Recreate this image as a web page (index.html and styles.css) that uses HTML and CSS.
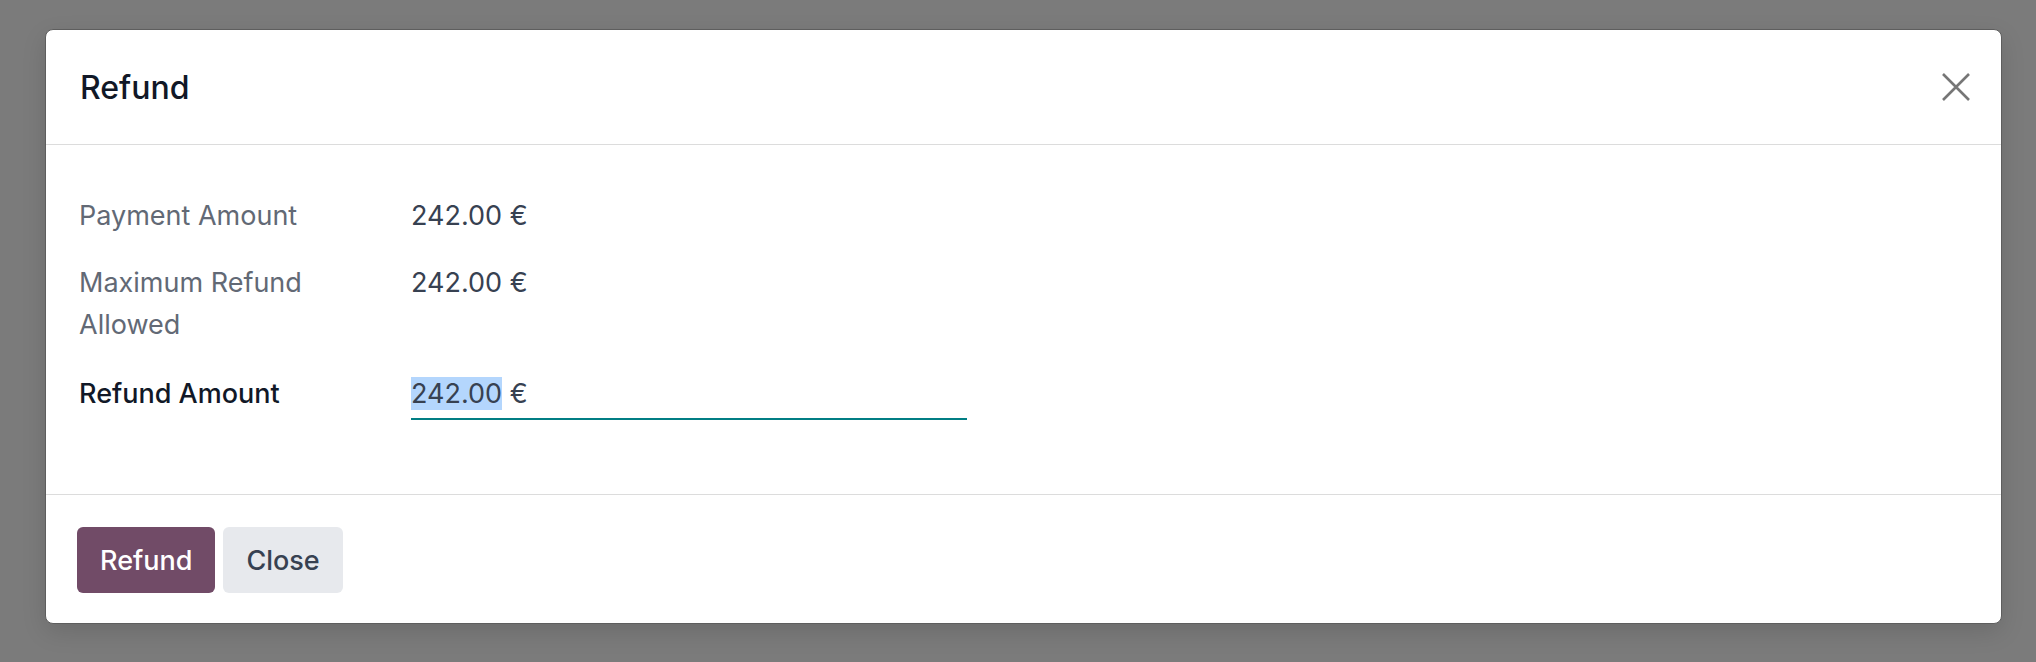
FILE: index.html
```
<!DOCTYPE html>
<html>
	<head>
		<meta charset="utf-8"/>
		<title>Refund</title>
		<link rel="stylesheet" href="styles.css">
	</head>
	<body>
		<div class="backdrop">
			<div class="modal">
				<div class="modal-header">
					<h4 class="modal-title">Refund</h4>
					<button class="btn-close" aria-label="Close">
						<svg width="28" height="28" viewBox="0 0 28 28">
							<path d="M1 1 L27 27 M27 1 L1 27" stroke="#767676" stroke-width="2.6" fill="none"/>
						</svg>
					</button>
				</div>
				<div class="modal-body">
					<div class="form-grid">
						<div class="label-cell muted">Payment Amount</div>
						<div class="value-cell">242.00 €</div>

						<div class="label-cell muted">Maximum Refund Allowed</div>
						<div class="value-cell">242.00 €</div>

						<div class="label-cell strong input-row">Refund Amount</div>
						<div class="value-cell input-row">
							<div class="field-input"><span class="selected">242.00</span> €</div>
						</div>
					</div>
				</div>
				<div class="modal-footer">
					<button class="btn btn-primary">Refund</button>
					<button class="btn btn-secondary">Close</button>
				</div>
			</div>
		</div>
	</body>
</html>
```
FILE: styles.css
```
body {
	margin: 0;
	background-color: #7b7b7b;
	font-family: "Inter", "Noto Sans", sans-serif;
}
.backdrop {
	padding: 29px 0 38px 45px;
}
.modal {
	width: 1955px;
	background-color: #fff;
	border: 1px solid #5e5e5e;
	border-radius: 8px;
	box-shadow: 0 8px 24px rgba(0, 0, 0, 0.12);
}
.modal-header {
	display: flex;
	align-items: center;
	justify-content: space-between;
	height: 114px;
	padding: 0 31px 0 34px;
	border-bottom: 1px solid #dcdcdc;
}
.modal-title {
	margin: 0;
	font-size: 32px;
	font-weight: 500;
	color: #111827;
}
.btn-close {
	display: flex;
	width: 28px;
	height: 28px;
	padding: 0;
	border: none;
	background: none;
}
.modal-body {
	padding: 50px 32px 74px 33px;
	border-bottom: 1px solid #dcdcdc;
}
.form-grid {
	display: grid;
	grid-template-columns: 332px 556px;
	row-gap: 25px;
	font-size: 27px;
	line-height: 42px;
}
.label-cell {
	padding-right: 40px;
}
.muted {
	color: #626975;
}
.strong {
	color: #111827;
	font-weight: 500;
}
.value-cell {
	color: #374151;
}
.input-row {
	padding-top: 2px;
}
.field-input {
	padding-bottom: 3px;
	border-bottom: 2px solid #017e84;
}
.selected {
	background-color: #b4d6fd;
}
.modal-footer {
	display: flex;
	gap: 8px;
	padding: 32px 30px 30px 31px;
}
.btn {
	height: 66px;
	padding: 0 23px;
	border: none;
	border-radius: 6px;
	font-family: inherit;
	font-size: 27px;
	font-weight: 500;
}
.btn-primary {
	background-color: #714b67;
	color: #fff;
}
.btn-secondary {
	background-color: #e7e9ed;
	color: #374151;
}
```
